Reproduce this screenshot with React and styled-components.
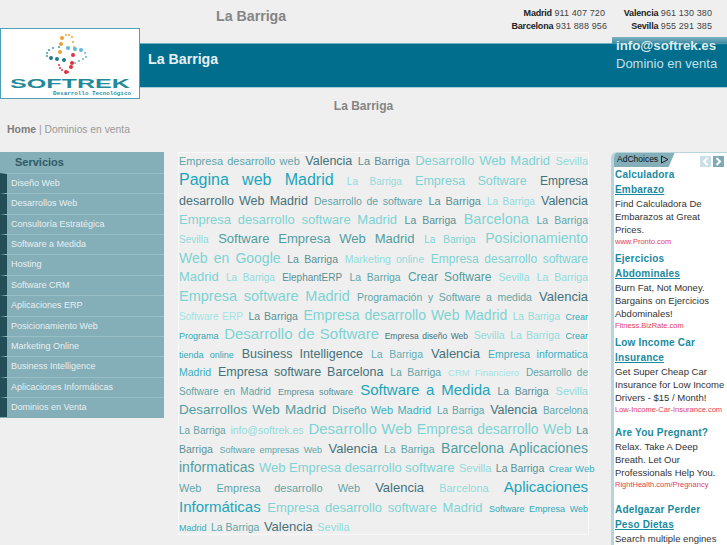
import styled, { createGlobalStyle } from "styled-components";

const GlobalStyle = createGlobalStyle`
  html, body {
    margin: 0;
    padding: 0;
    height: 545px;
    overflow: hidden;
    background: #efefef;
    font-family: "Liberation Sans", Arial, sans-serif;
  }
`;

const Header = styled.header`
  position: relative;
  height: 88px;
`;

const TopRow = styled.div`
  height: 43px;
  display: flex;
  justify-content: space-between;
`;

const SiteTitle = styled.h1`
  margin: 8px 0 0 216px;
  font-size: 14.2px;
  line-height: 17px;
  color: #858585;
`;

const Phones = styled.div`
  display: grid;
  grid-template-columns: auto 105px;
  grid-auto-rows: 12.5px;
  margin: 7px 15px 0 0;
  font-size: 9px;
  line-height: 12px;
  color: #444;
  letter-spacing: 0.1px;
  text-align: right;
  white-space: nowrap;
  b {
    color: #222;
    letter-spacing: -0.2px;
  }
  > div:first-child {
    padding-right: 2px;
  }
`;

const Banner = styled.div`
  height: 45px;
  box-sizing: border-box;
  padding: 7px 0 0 148px;
  background: #006e8c;
  border-top: 1px solid #6fb0c2;
  border-bottom: 1px solid #a5cdd8;
  color: #e6f0f2;
  font-size: 14.2px;
  font-weight: bold;
  line-height: 17px;
`;

const LogoBox = styled.a`
  position: absolute;
  left: 0;
  top: 28px;
  width: 140px;
  height: 71px;
  box-sizing: border-box;
  background: #fff;
  border: 1px solid #4f9fb5;
  svg {
    display: block;
  }
`;

const ContactTab = styled.div`
  position: absolute;
  right: 0;
  top: 37px;
  width: 115px;
  padding: 0 0 0 4px;
  box-sizing: border-box;
  background: linear-gradient(#7fb3c2 0, #3f8ea5 6px, transparent 8px);
  strong {
    display: block;
    font-size: 13.3px;
    line-height: 18px;
    color: #dcecf0;
  }
  span {
    display: block;
    margin-top: 0;
    font-size: 13px;
    line-height: 18px;
    color: #c2e0e8;
    white-space: nowrap;
  }
`;

const PageHeading = styled.h2`
  margin: 11px 0 0;
  font-size: 12px;
  line-height: 14px;
  text-align: center;
  color: #858585;
`;

const Breadcrumb = styled.div`
  margin: 8px 0 0 7px;
  height: 17px;
  font-size: 10.3px;
  line-height: 17px;
  color: #999;
  b {
    font-size: 10.5px;
    color: #7d7d7d;
  }
`;

const Columns = styled.div`
  display: grid;
  grid-template-columns: 164px 411px 124px;
  column-gap: 14px;
  margin-top: 14px;
  > aside:last-child {
    margin-left: 8px;
  }
`;

const Sidebar = styled.nav`
  background: #84aeb8;
  align-self: start;
  height: 266px;
`;

const SidebarTitle = styled.div`
  height: 21px;
  padding-left: 15px;
  font-size: 11px;
  font-weight: bold;
  line-height: 21px;
  color: #2f5b66;
`;

const MenuItem = styled.div`
  height: 20.36px;
  box-sizing: border-box;
  padding-left: 4px;
  border-left: 7px solid #234e58;
  border-top: 1px solid #98bec6;
  font-size: 9px;
  line-height: 19px;
  color: #e8f0f1;
`;

const Cloud = styled.section`
  box-sizing: border-box;
  height: 383px;
  border: 1px solid #f8f8f8;
`;

const CloudLine = styled.div`
  height: ${(p) => p.$h}px;
  line-height: ${(p) => p.$h - 6}px;
  white-space: nowrap;
  text-align: justify;
  text-align-last: ${(p) => (p.$last ? "left" : "justify")};
`;

const Tag = styled.span`
  font-size: ${(p) => p.$size}px;
  color: ${(p) => p.$color};
`;

const AdPanel = styled.aside`
  position: relative;
  height: 393px;
  background: #fff;
  border-left: 3px solid #b7d5dc;
  border-top: 1px solid #b7d5dc;
  border-top-left-radius: 6px;
  padding: 14px 0 0 1px;
  box-sizing: border-box;
  overflow: hidden;
`;

const AdTab = styled.div`
  position: absolute;
  left: -3px;
  top: -1px;
  width: 58px;
  height: 15px;
  padding-left: 6px;
  background: #84aeb8;
  clip-path: polygon(0 0, 100% 0, 90% 100%, 0 100%);
  border-top-left-radius: 6px;
  font-size: 8.5px;
  line-height: 15px;
  color: #111;
  display: flex;
  align-items: center;
  gap: 2px;
`;

const Arrow = styled.span`
  position: absolute;
  top: 3px;
  right: ${(p) => p.$right}px;
  width: 11px;
  height: 11px;
  background: ${(p) => (p.$on ? "#7fa9b5" : "#c9e0e5")};
  display: flex;
  align-items: center;
  justify-content: center;
`;

const Ad = styled.div`
  margin-top: ${(p) => p.$gap || 0}px;
`;

const AdTitle = styled.div`
  font-size: 10px;
  font-weight: bold;
  line-height: 15px;
  letter-spacing: 0.2px;
  color: #1a8a9e;
  u {
    text-decoration-thickness: 1px;
  }
`;

const AdText = styled.div`
  font-size: 9.5px;
  line-height: 13px;
  color: #333;
  white-space: nowrap;
`;

const AdUrl = styled.div`
  font-size: 7.5px;
  line-height: 11px;
  color: #e0405a;
  white-space: nowrap;
`;

const LIGHT = "#7dd3d3";
const PALE = "#8fdcdc";
const DARK = "#44727a";
const MID = "#5fa5a8";
const GREY = "#5a9095";
const SEA = "#4f9da0";
const AQUA = "#1ba5bb";
const CYAN = "#2faabb";

const lines = [
  [20, [["Empresa desarrollo web", 11, MID], ["Valencia", 12.5, DARK], ["La Barriga", 11, GREY], ["Desarrollo Web Madrid", 13, LIGHT], ["Sevilla", 11, PALE]]],
  [19.5, [["Pagina web Madrid", 16, AQUA], ["La Barriga", 10, PALE], ["Empresa Software", 12.5, LIGHT], ["Empresa", 12, DARK]]],
  [19, [["desarrollo Web Madrid", 12.5, DARK], ["Desarrollo de software", 10.5, MID], ["La Barriga", 11, GREY], ["La Barriga", 10, PALE], ["Valencia", 12.5, DARK]]],
  [19.5, [["Empresa desarrollo software Madrid", 13, LIGHT], ["La Barriga", 10.5, GREY], ["Barcelona", 14.5, LIGHT], ["La Barriga", 10.5, MID]]],
  [19.5, [["Sevilla", 10, PALE], ["Software Empresa Web Madrid", 13, SEA], ["La Barriga", 10, LIGHT], ["Posicionamiento", 14, LIGHT]]],
  [19.5, [["Web en Google", 14, LIGHT], ["La Barriga", 10.5, GREY], ["Marketing online", 10.5, PALE], ["Empresa desarrollo software", 12, LIGHT]]],
  [18.5, [["Madrid", 13, LIGHT], ["La Barriga", 10, PALE], ["ElephantERP", 10, GREY], ["La Barriga", 10.5, MID], ["Crear Software", 12, SEA], ["Sevilla", 10.5, PALE], ["La Barriga", 10.5, PALE]]],
  [19, [["Empresa software Madrid", 14.5, LIGHT], ["Programación y Software a medida", 10.5, MID], ["Valencia", 13, DARK]]],
  [19.5, [["Software ERP", 10, "#a0e4e4"], ["La Barriga", 10.5, GREY], ["Empresa desarrollo Web Madrid", 14, LIGHT], ["La Barriga", 10, PALE], ["Crear", 9, CYAN]]],
  [19.5, [["Programa", 9, CYAN], ["Desarrollo de Software", 15, LIGHT], ["Empresa diseño Web", 8.5, DARK], ["Sevilla", 10.5, PALE], ["La Barriga", 10.5, PALE], ["Crear", 9, CYAN]]],
  [18.5, [["tienda online", 9, CYAN], ["Business Intelligence", 12.5, DARK], ["La Barriga", 10.5, "#5fb0b5"], ["Valencia", 13, DARK], ["Empresa informatica", 10.5, "#3ab0c0"]]],
  [18, [["Madrid", 10.5, "#3ab0c0"], ["Empresa software Barcelona", 12.5, DARK], ["La Barriga", 10.5, MID], ["CRM Financiero", 9.5, "#a0e4e4"], ["Desarrollo de", 10, MID]]],
  [19, [["Software en Madrid", 10, MID], ["Empresa software", 9, GREY], ["Software a Medida", 15, AQUA], ["La Barriga", 10.5, GREY], ["Sevilla", 11, PALE]]],
  [19.5, [["Desarrollos Web Madrid", 13.5, SEA], ["Diseño Web Madrid", 11, "#3ab0c0"], ["La Barriga", 10, MID], ["Valencia", 12.5, DARK], ["Barcelona", 10, MID]]],
  [19, [["La Barriga", 10, MID], ["info@softrek.es", 10.5, PALE], ["Desarrollo Web", 15, LIGHT], ["Empresa desarrollo Web", 14, LIGHT], ["La", 10.5, GREY]]],
  [19.5, [["Barriga", 10.5, GREY], ["Software empresas Web", 9, MID], ["Valencia", 13, DARK], ["La Barriga", 10.5, MID], ["Barcelona Aplicaciones", 14, SEA]]],
  [19.5, [["informaticas", 14, SEA], ["Web Empresa desarrollo software", 13, LIGHT], ["Sevilla", 11, PALE], ["La Barriga", 10.5, GREY], ["Crear Web", 9.5, "#3ab0c0"]]],
  [20, [["Web", 11, MID], ["Empresa desarrollo", 11, MID], ["Web", 11, MID], ["Valencia", 13, DARK], ["Barcelona", 11, PALE], ["Aplicaciones", 15, AQUA]]],
  [19, [["Informáticas", 15, AQUA], ["Empresa desarrollo software Madrid", 13, LIGHT], ["Software Empresa Web", 9, CYAN]]],
  [19, [["Madrid", 9, CYAN], ["La Barriga", 10.5, MID], ["Valencia", 13, DARK], ["Sevilla", 11, PALE]]],
];

const services = [
  "Diseño Web",
  "Desarrollos Web",
  "Consultoría Estratégica",
  "Software a Medida",
  "Hosting",
  "Software CRM",
  "Aplicaciones ERP",
  "Posicionamiento Web",
  "Marketing Online",
  "Business Intelligence",
  "Aplicaciones Informáticas",
  "Dominios en Venta",
];

const ads = [
  { gap: 0, title: "Calculadora", link: "Embarazo", text: ["Find Calculadora De", "Embarazos at Great", "Prices."], url: "www.Pronto.com" },
  { gap: 4, title: "Ejercicios", link: "Abdominales", text: ["Burn Fat, Not Money.", "Bargains on Ejercicios", "Abdominales!"], url: "Fitness.BizRate.com" },
  { gap: 4, title: "Low Income Car", link: "Insurance", text: ["Get Super Cheap Car", "Insurance for Low Income", "Drivers - $15 / Month!"], url: "Low-Income-Car-Insurance.com" },
  { gap: 10, title: "Are You Pregnant?", text: ["Relax. Take A Deep", "Breath. Let Our", "Professionals Help You."], url: "RightHealth.com/Pregnancy" },
  { gap: 12, title: "Adelgazar Perder", link: "Peso Dietas", text: ["Search multiple engines"] },
];

const dots = [
  ["#e8a030", 2, [[62, 38], [61, 44], [60, 52]]],
  ["#e8a030", 1, [[66, 35], [69, 35], [72, 37], [73, 42], [74, 47]]],
  ["#5fb8dc", 2, [[68, 48], [75, 49], [81, 50]]],
  ["#5fb8c8", 1, [[85, 53], [86, 57], [83, 59], [79, 61], [75, 63]]],
  ["#3f9aa8", 1, [[59, 47], [53, 48], [49, 50], [47, 53], [47, 56]]],
  ["#1f7a8c", 2, [[51, 58], [57, 59], [64, 60]]],
  ["#e03040", 2, [[73, 55], [72, 63], [71, 67], [66, 72]]],
  ["#e03040", 1, [[62, 70], [59, 65], [60, 68], [68, 72]]],
];

function Logo() {
  return (
    <svg width="138" height="69" viewBox="1 29 138 69">
      {dots.map(([fill, r, points], i) =>
        points.map(([cx, cy]) => (
          <circle key={`${i}-${cx}-${cy}`} cx={cx} cy={cy} r={r} fill={fill} />
        ))
      )}
      <text
        x="10"
        y="88"
        textLength="120"
        lengthAdjust="spacingAndGlyphs"
        fontFamily="Liberation Sans"
        fontWeight="bold"
        fontSize="12.5"
        fill="#1f8a9a"
      >
        SOFTREK
      </text>
      <text
        x="53"
        y="95"
        textLength="78"
        lengthAdjust="spacingAndGlyphs"
        fontFamily="Liberation Mono"
        fontWeight="bold"
        fontSize="5.5"
        fill="#2f8f9f"
      >
        Desarrollo Tecnológico
      </text>
    </svg>
  );
}

export default function App() {
  return (
    <>
      <GlobalStyle />
      <Header>
        <TopRow>
          <SiteTitle>La Barriga</SiteTitle>
          <Phones>
            <div><b>Madrid</b> 911 407 720</div>
            <div><b>Valencia</b> 961 130 380</div>
            <div><b>Barcelona</b> 931 888 956</div>
            <div><b>Sevilla</b> 955 291 385</div>
          </Phones>
        </TopRow>
        <Banner>La Barriga</Banner>
        <LogoBox><Logo /></LogoBox>
        <ContactTab>
          <strong>info@softrek.es</strong>
          <span>Dominio en venta</span>
        </ContactTab>
      </Header>

      <PageHeading>La Barriga</PageHeading>
      <Breadcrumb><b>Home</b> | Dominios en venta</Breadcrumb>

      <Columns>
        <Sidebar>
          <SidebarTitle>Servicios</SidebarTitle>
          {services.map((s) => (
            <MenuItem key={s}>{s}</MenuItem>
          ))}
        </Sidebar>

        <Cloud>
          {lines.map(([h, tags], i) => (
            <CloudLine key={i} $h={h} $last={i === lines.length - 1}>
              {tags.map(([word, size, color], j) => (
                <span key={j}>
                  <Tag $size={size} $color={color}>{word}</Tag>{" "}
                </span>
              ))}
            </CloudLine>
          ))}
        </Cloud>

        <AdPanel>
          <AdTab>
            AdChoices
            <svg width="9" height="9" viewBox="0 0 9 9">
              <path d="M1.5 1v7L8 4.5z" fill="none" stroke="#222" />
            </svg>
          </AdTab>
          <Arrow $right={16}>
            <svg width="7" height="9" viewBox="0 0 7 9">
              <path d="M5.5 1 2 4.5 5.5 8" fill="none" stroke="#fff" strokeWidth="2" />
            </svg>
          </Arrow>
          <Arrow $right={3} $on>
            <svg width="7" height="9" viewBox="0 0 7 9">
              <path d="M1.5 1 5 4.5 1.5 8" fill="none" stroke="#fff" strokeWidth="2" />
            </svg>
          </Arrow>
          {ads.map((ad) => (
            <Ad key={ad.title} $gap={ad.gap}>
              <AdTitle>{ad.title}</AdTitle>
              {ad.link && <AdTitle><u>{ad.link}</u></AdTitle>}
              {ad.text.map((t) => (
                <AdText key={t}>{t}</AdText>
              ))}
              {ad.url && <AdUrl>{ad.url}</AdUrl>}
            </Ad>
          ))}
        </AdPanel>
      </Columns>
    </>
  );
}
